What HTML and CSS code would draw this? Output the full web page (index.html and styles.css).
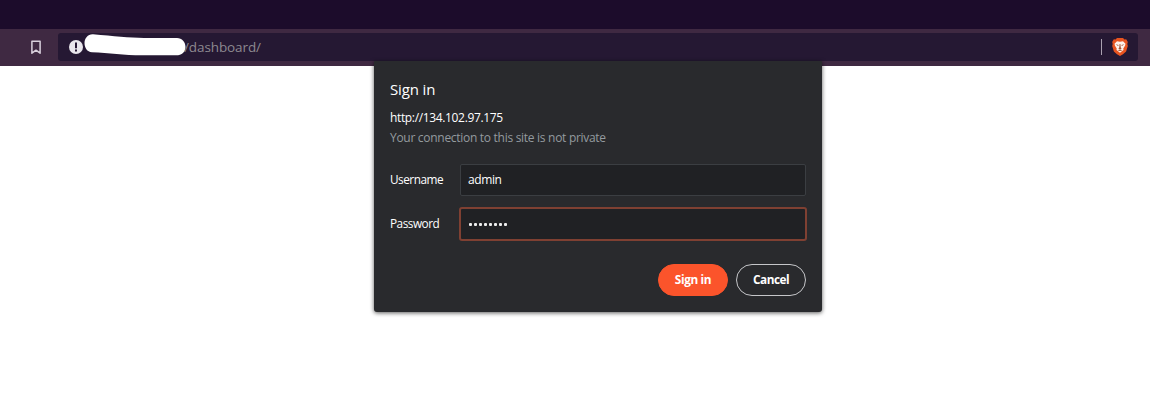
FILE: index.html
```html
<!DOCTYPE html>
<html lang="en">
<head>
<meta charset="utf-8">
<title>Sign in</title>
<link rel="stylesheet" href="styles.css">
</head>
<body>
<div class="tabstrip"></div>
<header class="toolbar">
  <svg class="bookmark" width="12" height="15" viewBox="0 0 12 15"><path d="M1.900 1.200h8.200v12L6 10.200l-4.100 3z" fill="none" stroke="#d9d0dc" stroke-width="1.500" stroke-linejoin="round"/></svg>
  <div class="address">
    <svg class="warning" width="14" height="14" viewBox="0 0 14 14"><circle cx="7" cy="7" r="7" fill="#e9e6ec"/><path d="M6 2.500h2v5.700H6zM6 9.600h2v2H6z" fill="#241632"/></svg>
    <svg class="redaction" width="102" height="22" viewBox="0 0 102 22"><path d="M9 .3C30 2 45 4 60 4H93C98 4 101.500 8 101.500 13S98 21.300 92 21.300H58C40 21.300 25 19 8 18.300C3 18 .5 13.500 .5 9S4 0 9 .3Z" fill="#fff"/></svg>
    <span class="path">/dashboard/</span>
    <span class="divider"></span>
    <svg class="shield" width="16" height="18" viewBox="0 0 16 18"><path d="M5 0h6l1.500 1.500 1.700-.2L15.800 4l-.5 2 .5 2-1.700 5.600L11 16.200 8 18l-3-1.800-3.100-2.600L.2 8l.5-2-.5-2 1.600-2.700 1.700.2z" fill="#e85420"/><path d="M5 3.300l3 .5 3-.5 2.500 2.500-.5 2-1.700 2.600.2 1.600L8 14.700 4.500 12l.2-1.600L3 7.800l-.5-2z" fill="#fff3ec"/><path d="M3.600 6.200l3 .7-.5 1zM12.400 6.200l-3 .7.5 1zM7.600 6h.8l.3 3.500 1 .9L8 11.300l-1.700-.9 1-.9zM5.500 12.200l2.500-.7 2.500.7-2.500.8z" fill="#a5502f"/></svg>
  </div>
</header>
<main class="dialog">
  <h1 class="title">Sign in</h1>
  <p class="origin">http://134.102.97.175</p>
  <p class="notice">Your connection to this site is not private</p>
  <form class="form">
    <label class="row"><span class="label">Username</span><span class="field">admin</span></label>
    <label class="row"><span class="label">Password</span><span class="field focused"><span class="dots"><i class="dot"></i><i class="dot"></i><i class="dot"></i><i class="dot"></i><i class="dot"></i><i class="dot"></i><i class="dot"></i><i class="dot"></i></span></span></label>
    <div class="actions">
      <button type="button" class="button primary">Sign in</button>
      <button type="button" class="button">Cancel</button>
    </div>
  </form>
</main>
</body>
</html>
```
FILE: styles.css
```css
* { box-sizing: border-box; }
body { margin: 0; height: 416px; overflow: hidden; background: #fff; font-family: "Open Sans", "Noto Sans", sans-serif; }
.tabstrip { height: 29px; background: #1c0c2b; }
.toolbar { height: 37px; padding: 4px 12px 5px 30px; display: flex; background: #3f2942; }
.bookmark { margin: 7px 16px 0 0; flex: none; }
.address { flex: 1; height: 28px; display: flex; align-items: center; padding: 0 10px 0 11px; border-radius: 3px; background: #251833; }
.warning { flex: none; }
.redaction { flex: none; margin: -5px 0 0 1px; }
.path { margin-left: -2px; color: #8d8990; font-size: 13.5px; letter-spacing: -.1px; line-height: 28px; white-space: nowrap; }
.divider { width: 1px; height: 16px; margin: 0 10px 0 auto; background: #aaa1b0; }
.shield { flex: none; }
.dialog { position: absolute; left: 374px; top: 61px; width: 448px; height: 251px; padding: 17px 16px 16px; border-radius: 0 0 3px 3px; background: #292a2d; color: #fff; box-shadow: 0 1px 4px rgba(0,0,0,.65); font-size: 12px; }
.title { margin: 0; font-size: 15px; font-weight: 400; line-height: 22px; letter-spacing: -.15px; }
.origin { margin: 8px 0 0; line-height: 20px; letter-spacing: -.35px; white-space: nowrap; }
.notice { margin: 0; line-height: 20px; color: #949a9f; letter-spacing: -.29px; white-space: nowrap; }
.form { margin-top: 16px; display: flex; flex-direction: column; gap: 12px; }
.row { height: 32px; display: flex; align-items: center; }
.label { width: 70px; padding-bottom: 2px; font-size: 11.8px; letter-spacing: -.5px; }
.field { flex: 1; height: 32px; display: flex; align-items: center; padding: 0 7px 1px; border: 1px solid #3b3e42; border-radius: 2px; background: #202124; letter-spacing: -.4px; }
.focused { height: 34px; margin: -1px; padding: 0 7px; border: 2px solid #7f4032; border-radius: 3px; }
.dots { display: flex; gap: 2px; padding-left: 1px; }
.dot { width: 3px; height: 3px; border-radius: 1px; background: #eee; }
.actions { display: flex; justify-content: flex-end; gap: 8px; margin-top: 12px; }
.button { width: 70px; height: 32px; padding: 0 0 2px; border: 1px solid #c5c6c9; border-radius: 16px; background: transparent; color: #fff; font: 700 11.8px "Open Sans", "Noto Sans", sans-serif; letter-spacing: -.5px; }
.primary { border-color: #fb542b; background: #fb542b; letter-spacing: -.35px; }
```
